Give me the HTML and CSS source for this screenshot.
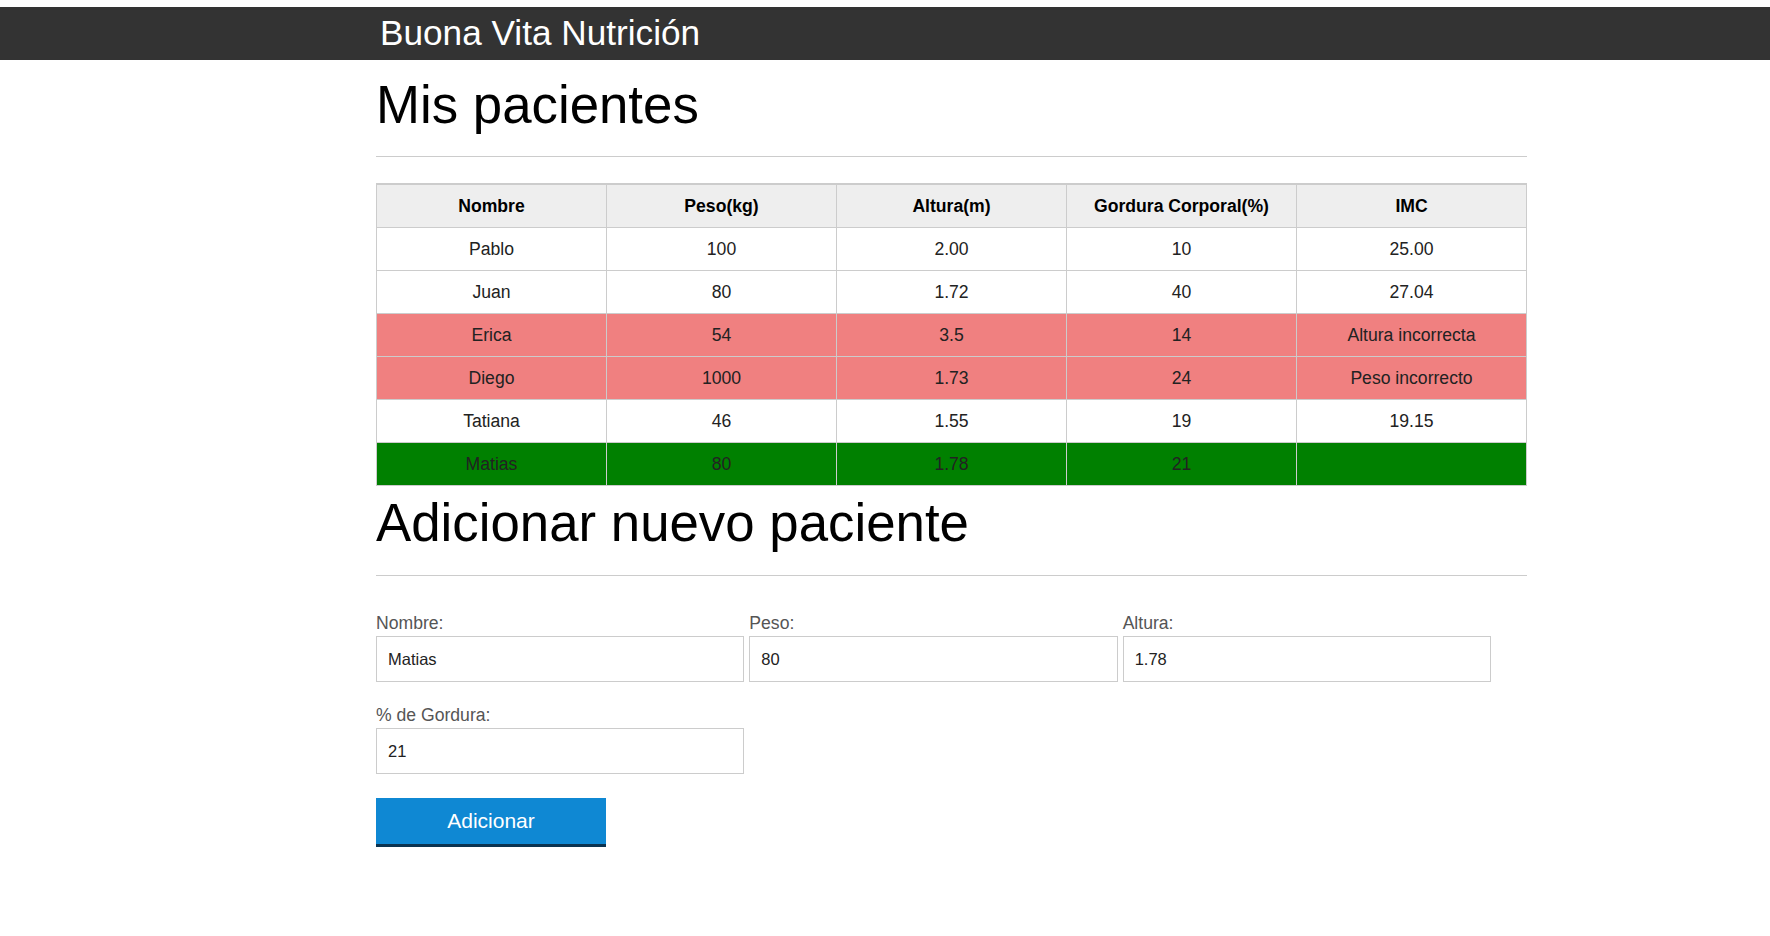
FILE: index.html
```html
<!DOCTYPE html>
<html lang="es">
<head>
<meta charset="utf-8">
<title>Buona Vita Nutrición</title>
<link rel="stylesheet" href="styles.css">
</head>
<body>
<header class="topbar">
  <div class="container">
    <h1 class="brand">Buona Vita Nutrición</h1>
  </div>
</header>
<main class="container">
  <section>
    <h2 class="section-title">Mis pacientes</h2>
    <hr class="divider">
    <table class="patients">
      <thead>
        <tr>
          <th>Nombre</th>
          <th>Peso(kg)</th>
          <th>Altura(m)</th>
          <th>Gordura Corporal(%)</th>
          <th>IMC</th>
        </tr>
      </thead>
      <tbody>
        <tr><td>Pablo</td><td>100</td><td>2.00</td><td>10</td><td>25.00</td></tr>
        <tr><td>Juan</td><td>80</td><td>1.72</td><td>40</td><td>27.04</td></tr>
        <tr class="invalid"><td>Erica</td><td>54</td><td>3.5</td><td>14</td><td>Altura incorrecta</td></tr>
        <tr class="invalid"><td>Diego</td><td>1000</td><td>1.73</td><td>24</td><td>Peso incorrecto</td></tr>
        <tr><td>Tatiana</td><td>46</td><td>1.55</td><td>19</td><td>19.15</td></tr>
        <tr class="new"><td>Matias</td><td>80</td><td>1.78</td><td>21</td><td></td></tr>
      </tbody>
    </table>
  </section>
  <section>
    <h2 class="section-title second">Adicionar nuevo paciente</h2>
    <hr class="divider divider-form">
    <form class="patient-form">
      <div class="fields">
        <div class="group">
          <label for="nombre">Nombre:</label>
          <input id="nombre" type="text" value="Matias">
        </div>
        <div class="group">
          <label for="peso">Peso:</label>
          <input id="peso" type="text" value="80">
        </div>
        <div class="group">
          <label for="altura">Altura:</label>
          <input id="altura" type="text" value="1.78">
        </div>
        <div class="group">
          <label for="gordura">% de Gordura:</label>
          <input id="gordura" type="text" value="21">
        </div>
      </div>
      <button type="button" class="btn">Adicionar</button>
    </form>
  </section>
</main>
</body>
</html>
```

FILE: styles.css
```css
* {
  box-sizing: border-box;
}

body {
  margin: 7px 0 0;
  font-family: "Liberation Sans", Arial, sans-serif;
  font-size: 17.6px;
  color: #222;
  background: #fff;
}

.container {
  width: 1151px;
  margin-left: 376px;
}

.topbar {
  background: #333;
  padding: 6px 0 7px;
}

.topbar .container {
  padding-left: 4px;
}

.brand {
  margin: 0;
  font-size: 35.2px;
  line-height: 40px;
  font-weight: normal;
  color: #fff;
}

.section-title {
  margin: 14px 0 0;
  font-size: 52.8px;
  line-height: 61px;
  font-weight: normal;
  color: #000;
}

.section-title.second {
  margin-top: 6px;
}

.divider {
  height: 0;
  border: 0;
  border-top: 1px solid #ccc;
  margin: 21px 0 26px;
}

.divider-form {
  margin: 22px 0 37px;
}

.patients {
  width: 100%;
  border-collapse: collapse;
  table-layout: fixed;
  border-top: 2px solid #ccc;
}

.patients th,
.patients td {
  border: 1px solid #ccc;
  padding: 11px 8px;
  line-height: 20px;
  text-align: center;
  font-size: 17.6px;
}

.patients th {
  background: #eee;
  color: #000;
  font-weight: bold;
}

.patients td {
  color: #222;
}

.patients tr.invalid td {
  background: lightcoral;
}

.patients tr.new td {
  background: #008000;
}

.fields {
  display: flex;
  flex-wrap: wrap;
  column-gap: 5px;
  row-gap: 23px;
}

.group {
  width: 32%;
}

.group label {
  display: block;
  font-size: 17.6px;
  line-height: 20px;
  color: #555;
  margin-bottom: 3px;
}

.group input {
  display: block;
  width: 100%;
  height: 46px;
  border: 1px solid #ccc;
  padding: 0 11px;
  font-family: "Liberation Sans", Arial, sans-serif;
  font-size: 16.5px;
  color: #222;
  background: #fff;
  outline: none;
}

.btn {
  display: block;
  margin-top: 24px;
  width: 230px;
  height: 49px;
  border: 0;
  border-bottom: 3px solid #0b3350;
  background: #0f88d3;
  color: #fff;
  font-family: "Liberation Sans", Arial, sans-serif;
  font-size: 21px;
  padding: 0;
  cursor: pointer;
}
```
